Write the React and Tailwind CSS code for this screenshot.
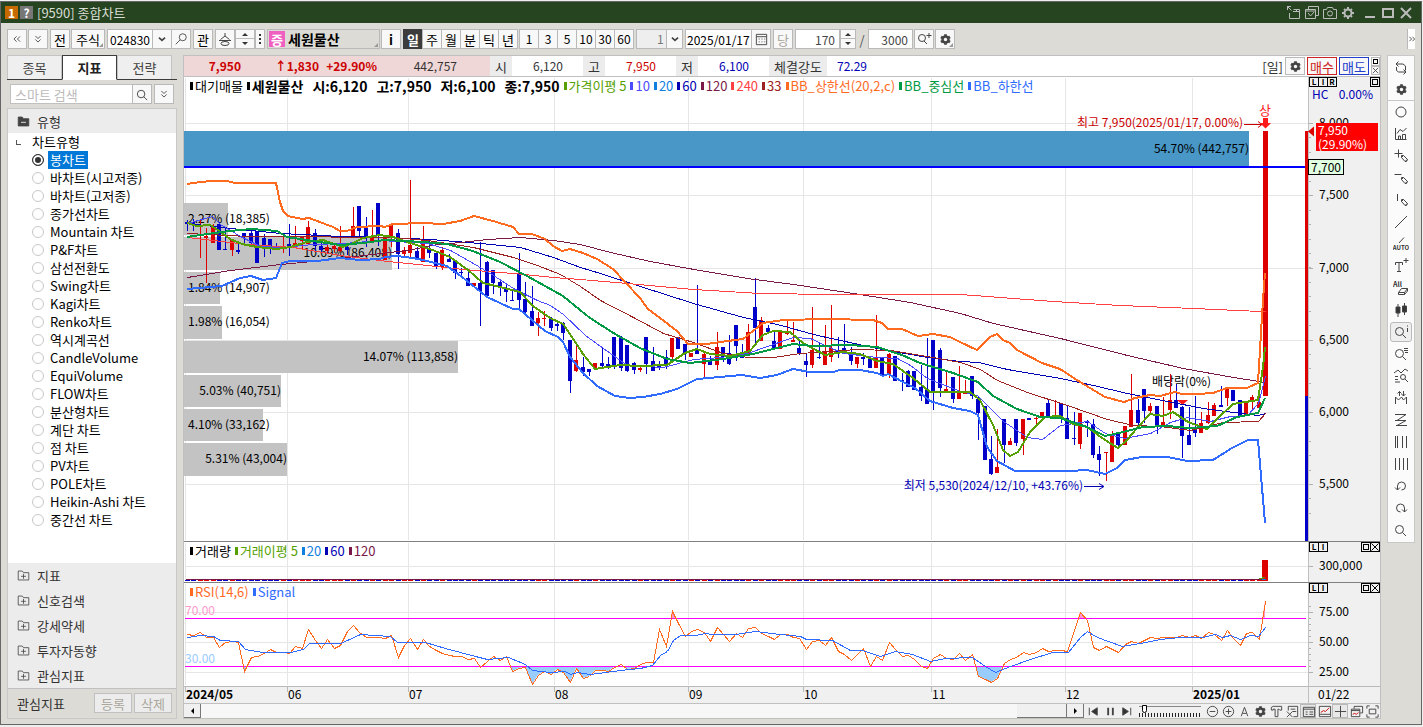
import React, { useState } from "react";
import { FaCog } from "react-icons/fa";

const FONT = "font-['Noto_Sans_CJK_KR',sans-serif]";

const chartTypes = [
    "봉차트", "바차트(시고저종)", "바차트(고저종)", "종가선차트", "Mountain 차트", "P&F차트", "삼선전환도",
    "Swing차트", "Kagi차트", "Renko차트", "역시계곡선", "CandleVolume", "EquiVolume", "FLOW차트",
    "분산형차트", "계단 차트", "점 차트", "PV차트", "POLE차트", "Heikin-Ashi 차트", "중간선 차트"
];

const folders = ["지표", "신호검색", "강세약세", "투자자동향", "관심지표"];

// [high, body top, body bottom, low, up]
const candles = [
    [220,222,224,231,0],[219,222,224,231,0],[219,225,227,258,1],[228,236,238,283,1],[224,226,243,243,1],
    [222,224,250,250,0],[227,249,250,250,0],[239,240,250,256,1],[241,250,252,254,0],[233,233,236,243,0],
    [230,233,243,246,0],[231,231,263,263,0],[234,238,247,257,0],[239,239,246,254,0],[243,247,249,250,0],
    [236,248,249,253,1],[224,244,248,256,0],[226,243,245,247,1],[236,236,241,249,1],[221,227,244,244,1],
    [229,233,246,252,0],[243,246,250,252,0],[245,247,251,253,1],[244,246,249,252,1],[226,247,251,252,1],
    [246,247,250,255,0],[207,226,237,238,1],[206,206,231,237,0],[217,227,238,247,0],[210,238,241,242,1],
    [203,203,236,246,0],[237,237,260,260,1],[224,225,238,247,1],[229,233,254,269,0],[247,250,254,256,1],
    [180,245,253,257,1],[247,251,259,260,0],[226,240,262,262,1],[240,249,253,258,0],[252,253,266,269,0],
    [247,250,267,270,1],[254,259,262,262,0],[260,261,273,279,0],[268,272,273,278,0],[270,278,286,286,0],
    [283,283,286,286,1],[242,283,291,326,0],[261,262,296,296,0],[270,270,283,294,0],[281,282,286,296,0],
    [284,288,292,302,0],[290,300,301,301,0],[253,273,300,308,0],[282,299,312,315,0],[286,311,326,326,0],
    [312,318,323,336,1],[311,318,319,326,1],[317,319,328,331,0],[323,324,326,331,0],[322,323,333,340,0],
    [340,340,381,393,0],[345,360,371,372,1],[357,367,372,376,0],[369,369,372,376,0],[363,363,368,368,1],
    [348,363,366,369,0],[357,364,367,369,0],[337,337,367,369,0],[336,337,368,371,0],[345,345,371,372,0],
    [362,363,370,374,0],[367,368,370,372,1],[337,337,364,374,0],[347,361,371,371,0],[361,364,367,370,0],
    [350,357,365,369,0],[338,338,357,361,1],[337,337,349,349,0],[344,344,354,360,0],[353,353,357,357,1],
    [285,349,354,354,0],[351,354,364,378,1],[356,361,365,365,0],[332,347,365,370,1],[347,347,357,362,0],
    [335,353,364,365,0],[325,325,346,361,0],[344,356,358,358,0],[324,332,354,355,1],[278,307,328,343,0],
    [317,320,341,341,1],[325,328,332,333,0],[332,341,348,348,0],[330,331,349,349,1],[320,332,334,335,1],
    [322,340,342,342,1],[340,348,354,355,0],[353,361,365,377,0],[307,350,365,368,1],[343,357,358,359,0],
    [325,352,365,365,1],[305,348,357,362,1],[337,350,354,358,0],[324,348,353,353,0],[347,354,361,365,0],
    [357,357,364,368,1],[353,357,359,365,0],[358,359,368,368,0],[315,357,368,368,1],[357,358,375,377,0],
    [353,354,375,378,1],[356,356,381,381,0],[373,380,381,391,0],[370,371,387,387,0],[371,371,390,390,0],
    [365,387,396,401,0],[338,389,404,404,0],[340,340,391,410,0],[348,350,388,397,0],[371,389,391,391,1],
    [377,377,399,403,0],[366,393,399,399,1],[380,392,394,394,1],[376,376,396,399,0],[397,399,413,440,0],
    [406,406,460,460,0],[436,459,474,475,0],[429,467,473,473,1],[419,419,445,463,0],[438,441,445,445,1],
    [419,419,443,446,0],[419,419,439,455,1],[418,418,420,420,0],[417,418,419,426,1],[412,412,416,416,1],
    [400,403,416,416,0],[400,415,417,417,1],[403,403,418,423,0],[406,418,439,439,0],[412,438,439,445,0],
    [413,413,444,449,1],[420,421,423,437,0],[419,424,455,458,0],[446,454,460,476,0],[452,452,453,481,1],
    [431,434,462,462,1],[433,434,445,446,0],[426,426,445,445,1],[374,410,427,427,1],[399,410,423,426,0],
    [389,389,411,423,0],[403,406,411,413,1],[406,406,425,434,0],[397,422,426,426,1],[374,400,410,419,1],
    [384,400,408,408,0],[406,407,436,458,0],[407,435,445,445,0],[396,428,433,437,0],[412,423,433,433,1],
    [402,415,423,424,1],[403,405,416,416,1],[386,405,407,407,0],[389,389,398,406,1],[390,390,401,401,0],
    [400,400,416,416,0],[401,401,416,416,1],[395,397,402,411,1],[396,402,408,408,1],[131,131,396,396,1]
];

const lines = [
    { color: "#0000b4", width: 1, points: "187,223 240,229 280,233 340,236 387,237 430,239 480,243 520,247 553,257 580,267 600,273 643,287 693,303 743,317 777,324 817,335 877,348 927,357 960,361 978,362 1007,369 1060,378 1093,385 1127,393 1167,401 1203,408 1233,412 1258,415 1265,413" },
    { color: "#9c2222", width: 1, points: "187,233 247,236 313,236 347,237 393,237 427,240 473,247 513,257 537,265 560,274 580,286 600,300 633,317 663,333 693,342 723,353 747,357 773,357 800,353 857,349 890,350 927,356 960,362 980,369 997,380 1027,392 1067,405 1107,419 1133,425 1160,426 1190,430 1223,422 1258,421 1265,413" },
    { color: "#7a1848", width: 1, points: "187,277 230,270 280,264 323,260 363,255 407,250 437,244 460,242 487,239 520,237 553,240 580,244 610,252 650,261 688,268 747,278 793,284 853,293 910,302 960,313 993,323 1060,338 1127,355 1183,368 1233,377 1265,382" },
    { color: "#ff4040", width: 1, points: "187,237 247,244 293,247 340,255 387,261 427,265 463,269 513,273 553,277 580,279 627,283 693,289 760,293 833,294 960,294 1053,301 1120,305 1193,308 1260,311 1265,311" },
    { color: "#4a4aff", width: 1, points: "187,223 212,216 220,224 240,236 260,246 283,247 313,244 343,243 380,240 427,243 450,250 473,263 493,275 513,288 537,300 550,305 563,314 585,335 603,348 627,365 663,367 693,359 720,357 747,353 767,346 793,337 810,338 827,346 843,353 877,357 897,358 910,365 927,378 960,391 977,395 1003,421 1027,437 1042,439 1060,425 1087,421 1105,433 1124,438 1150,433 1170,422 1187,417 1210,421 1230,416 1247,415 1258,403 1265,376" },
    { color: "#55a000", width: 2, points: "187,223 197,226 210,225 218,230 230,239 242,244 257,247 277,249 290,247 307,242 323,240 343,247 353,243 363,238 380,235 393,237 410,243 430,249 450,257 468,270 483,283 500,287 520,292 533,306 550,318 563,324 572,337 583,354 595,369 620,365 640,366 667,365 685,353 697,349 710,354 730,356 750,351 763,335 773,331 790,332 803,343 825,355 843,352 860,354 877,361 893,364 913,378 930,392 960,392 970,392 980,400 993,425 1003,450 1010,456 1018,452 1030,432 1045,417 1060,416 1073,424 1087,427 1105,440 1118,448 1127,440 1137,428 1150,414 1163,416 1173,412 1188,422 1207,429 1218,418 1233,404 1258,400 1263,367 1265,347" },
    { color: "#ff6a1f", width: 2, points: "187,184 200,182 213,181 227,181 235,183 276,183 280,202 283,211 288,216 302,219 309,218 317,221 333,227 340,231 347,231 357,227 380,226 385,227 393,224 423,223 443,224 460,221 474,216 493,221 513,227 519,234 532,234 545,239 553,246 562,251 570,249 583,253 597,259 613,269 625,282 640,298 648,309 660,318 677,331 688,344 707,344 720,342 743,339 763,323 783,320 827,319 873,320 882,323 888,329 902,329 918,336 933,334 950,337 960,342 977,350 990,337 997,334 1003,340 1010,343 1017,350 1042,363 1060,369 1080,382 1105,397 1124,402 1135,398 1150,395 1160,396 1175,392 1182,394 1197,394 1213,393 1227,388 1247,388 1258,383 1261,333 1263,300 1265,273" },
    { color: "#009944", width: 2, points: "187,237 207,234 230,231 251,229 277,231 287,237 313,241 340,245 363,243 385,240 423,242 447,244 473,251 500,262 527,276 545,286 563,296 580,310 590,318 615,334 640,348 667,359 690,363 723,359 753,354 773,349 793,344 813,346 850,345 877,347 902,355 920,363 953,373 978,382 993,396 1017,409 1040,417 1060,418 1087,427 1105,436 1123,432 1143,427 1167,426 1190,428 1217,426 1237,417 1258,413 1265,398" },
    { color: "#2f6bff", width: 2, points: "187,289 200,288 222,286 240,278 251,276 263,280 276,278 282,263 290,261 317,261 340,258 360,260 380,259 385,257 397,256 413,258 423,260 447,266 462,277 487,297 513,309 519,309 532,320 545,331 558,337 563,342 570,357 583,373 597,386 615,396 630,398 643,397 660,394 677,389 697,379 720,377 742,375 760,378 777,375 793,369 810,372 833,372 840,370 860,370 877,373 883,376 888,374 903,382 915,388 930,401 953,408 970,411 978,415 987,447 997,461 1015,471 1070,471 1087,470 1105,474 1117,468 1125,460 1142,457 1167,457 1188,461 1213,460 1232,448 1248,440 1258,440 1265,523" }
];

const rsi = [
    634,635,632,637,637,647,642,641,642,671,657,656,653,649,652,652,653,646,648,629,640,648,639,648,645,631,625,632,637,637,
    637,638,635,657,645,638,649,639,646,650,653,655,656,656,659,658,667,661,656,660,656,671,668,667,684,675,671,674,669,672,
    682,668,678,676,670,670,671,667,664,669,668,664,662,662,629,646,611,623,636,631,629,632,641,627,634,641,633,637,628,627,
    633,636,639,634,634,637,638,649,641,640,645,637,651,654,660,654,648,666,656,660,642,649,656,655,659,666,668,658,654,658,
    659,653,660,654,676,679,682,678,663,659,657,652,654,652,648,651,650,650,651,630,612,620,647,650,646,649,652,644,641,643,
    640,637,638,637,637,637,635,637,635,638,632,634,640,630,638,645,633,632,639,601
];

const signal = "187,637 200,635 213,636 220,640 238,641 245,649 262,652 290,652 303,649 309,643 340,643 347,640 360,634 390,636 397,642 425,642 445,648 475,656 487,659 508,657 525,664 532,670 550,672 565,671 570,674 577,672 590,674 620,670 640,668 652,665 660,655 667,651 673,640 680,635 695,635 705,633 712,634 735,634 755,631 780,634 800,636 806,639 832,640 850,650 862,650 880,656 895,651 912,654 930,661 945,658 972,657 985,666 995,672 1000,670 1010,666 1030,659 1052,652 1068,652 1080,637 1087,631 1095,636 1105,640 1122,646 1140,643 1160,639 1180,637 1202,637 1215,634 1222,637 1230,635 1240,639 1250,635 1258,636 1265,627";

const profile = [
    { y: 203, h: 32, end: 228, label: "2.27% (18,385)" },
    { y: 237, h: 33, end: 392, label: "10.69% (86,408)" },
    { y: 272, h: 32, end: 220, label: "1.84% (14,907)" },
    { y: 306, h: 33, end: 222, label: "1.98% (16,054)" },
    { y: 341, h: 32, end: 458, label: "14.07% (113,858)" },
    { y: 375, h: 32, end: 281, label: "5.03% (40,751)" },
    { y: 409, h: 32, end: 263, label: "4.10% (33,162)" },
    { y: 443, h: 33, end: 287, label: "5.31% (43,004)" }
];

const months = [
    { x: 185, label: "2024/05", bold: true },
    { x: 287, label: "06" },
    { x: 408, label: "07" },
    { x: 554, label: "08" },
    { x: 688, label: "09" },
    { x: 803, label: "10" },
    { x: 931, label: "11" },
    { x: 1065, label: "12" },
    { x: 1192, label: "2025/01", bold: true }
];

const priceLevels = [
    [123, "8,000"], [195, "7,500"], [268, "7,000"], [340, "6,500"], [412, "6,000"], [484, "5,500"]
];

const candleX = (i) => Math.round(187 + i * 6.38);

/* ---------- icons ---------- */

const Icon = ({ d, size = 16, color = "#444", children, width = 1, className = "" }) => (
    <svg width={size} height={size} viewBox="0 0 16 16" fill="none" stroke={color} strokeWidth={width} className={`shrink-0 ${className}`} aria-hidden="true">
        {d && <path d={d} />}
        {children}
    </svg>
);

const PENCIL = "M8.5 9.5v-2h2l4 4-1 2-1.5 0zM8.5 9.5l2-2M12 13.5l2.5-2";
const LENS = "M10.5 7.5a4 4 0 1 1-8 0a4 4 0 0 1 8 0zM9.5 10.5l3.5 3.5";

const Gear = ({ size = 11 }) => <FaCog size={size} color="#444" aria-hidden="true" />;
const DownDouble = () => <Icon size={14} d="M5 4.5l3 3 3-3M5 8.5l3 3 3-3" />;
const DownArrow = () => <Icon size={14} width={2} d="M4.5 6.5l3.5 3 3.5-3" />;
const Corner = () => <span className="absolute bottom-px right-px border-b-4 border-l-4 border-b-[#999] border-l-transparent" />;

const sideTools = [
    { name: "새로고침", icon: <Icon d="M5.5 1.5L3 4l2.500 2.500M3 4h7l2.500 2v4.500M3.500 7v3.500l2 1.500H13M10.500 9.500L13 12l-2.500 2.500" /> },
    { name: "설정", icon: <Gear />, divider: true },
    { name: "원", icon: <Icon><circle cx="8" cy="8" r="5" /></Icon> },
    { name: "지표추가", icon: <Icon d="M2.5 2v11.5h11M4 7.5l3-4 3 2 3.5-3.5M5.5 13v-3h2v3M9.5 13V8.5h3V13" /> },
    { name: "십자선", icon: <Icon d={"M1.5 5.5h8M5.5 1.5v8" + PENCIL} /> },
    { name: "수평선", icon: <Icon d={"M1.5 4.5h7" + PENCIL} /> },
    { name: "수직선", icon: <Icon d={"M4.5 2v7" + PENCIL} /> },
    { name: "추세선", icon: <Icon d="M2 14L14 2" /> },
    {
        name: "자동추세선",
        icon: (
            <Icon d="M6 7L11 1.5">
                <text x="8" y="14" textAnchor="middle" fontSize="6" fontWeight="700" fill="#333" stroke="none">AUTO</text>
            </Icon>
        )
    },
    { name: "텍스트", icon: <Icon d="M2.5 7V4.5h7V7M6 4.5v9M4 13.5h4M10.5 2.5h5M13 0v5" /> },
    {
        name: "전체삭제",
        icon: (
            <Icon d="M5.5 12.5l3-4h6l-3 4zM5.5 12.5v2h6l3-3.5v-2.5M11.5 12.5v2">
                <text x="0" y="7" fontSize="7" fontWeight="700" fill="#333" stroke="none">All</text>
            </Icon>
        )
    },
    { name: "캔들", icon: <Icon d="M5 2v13M11.5 1v12"><path d="M3 5h4v6H3zM9.5 4h4v6h-4z" fill="#333" /></Icon> },
    { name: "정보보기", active: true, icon: <Icon d={LENS + "M14.5 4v4M14.5 1.5v1"} /> },
    { name: "목록보기", icon: <Icon d={LENS + "M11 2.5h4M11 4.5h4M12 6.5h3"} /> },
    { name: "패턴검색", icon: <Icon d="M1 5l4-3 3 3 4-4 3 2M2 8.5h3M2 11.5h3M2 14h5M12.5 9a2.5 2.5 0 1 1-5 0a2.5 2.5 0 0 1 5 0zM12 11l3 3" /> },
    { name: "변곡점", icon: <Icon d="M2.5 14V7l3 3 3-3 2 3 3-3v7M6.5 6V1.5M4.5 3.5l2-2 2 2M10.5 1v5M8.5 4l2 2 2-2" /> },
    { name: "지그재그", icon: <Icon d="M2 2.5h11L4 8.500M2 8.5h11L4 13.5M3 13.5h11" /> },
    { name: "등간격선", icon: <Icon d="M2.5 2v12M4.5 2v12M9.5 2v12M13.5 2v12" /> },
    { name: "시간선", icon: <Icon d="M2.5 2v12M6.5 2v12M10.5 2v12M14.5 2v12" /> },
    { name: "되돌리기", icon: <Icon d="M4.5 12V8A4 4 0 1 1 8.5 12M2 9.5L4.5 12 7 9.5" /> },
    { name: "다시실행", icon: <Icon d="M11.5 12V8A4 4 0 1 0 7.5 12M14 9.5L11.5 12 9 9.5" /> },
    { name: "확대", icon: <Icon d={LENS} /> }
];

const bottomTools = [
    { name: "축소", icon: <Icon size={15}><circle cx="8" cy="8" r="5.5" /><path d="M5 8h6" /></Icon> },
    { name: "확대", icon: <Icon size={15}><circle cx="8" cy="8" r="5.5" /><path d="M5 8h6M8 5v6" /></Icon> },
    { name: "글자", icon: <Icon size={15} d="M4.5 13L8 3.5 11.5 13M6 10h4" /> },
    { name: "설정", icon: <Gear size={11} /> },
    { name: "도구", icon: <Icon size={15} d="M2.500 6.500v-3l2-1h9v4h-2l-1-1h-1v8h-3v-8h-2v1z" /> },
    { name: "엑셀", icon: <Icon size={15} d="M3.5 7V2.5h10v11H9M6 5.5h5M8 8h4M2 8l6 6M8 8l-6 6" /> },
    { name: "데이터", active: true, icon: <Icon size={15} d="M2.5 3.5h12v10h-12zM2.5 5.5h12M5 8.5h2M5 11h2M9 8.5h4M9 11h4" /> },
    { name: "차트", icon: <Icon size={15} d="M2.5 2.5h12v11h-12zM2.5 11h12"><path d="M4 9l3-2 2 1 4-4" stroke="#c00" /></Icon> },
    { name: "십자", active: true, icon: <Icon size={15} d="M8 2v12M2 8h12" /> },
    { name: "창복사", icon: <Icon size={15} d="M5.5 5V2.5h9v7H12M2.5 5.5h9v8h-9zM2.5 7h9"><path d="M4 11l2-1 2 1 2-2" stroke="#c00" /></Icon> },
    { name: "전체화면", icon: <Icon size={15} d="M2 5V2h3M11 2h3v3M14 11v3h-3M5 14H2v-3M4.5 5.5h7v5h-7z" /> }
];

/* ---------- small parts ---------- */

const ToolButton = ({ children, className = "w-5", label, active }) => (
    <button
        type="button"
        aria-label={label}
        className={`relative flex h-5 shrink-0 items-center justify-center border text-[13px] leading-none ${active ? "border-[#3c3c3c] bg-[#3c3c3c] font-bold text-white" : "border-[#b9b9b9] bg-[#f8f8f8] text-black"} ${className}`}
    >
        {children}
    </button>
);

const Spinner = ({ label, className = "w-4" }) => (
    <div className={`flex h-5 shrink-0 flex-col ${className}`}>
        <button type="button" aria-label={`${label} 증가`} className="flex h-[10px] items-center justify-center border border-[#b9b9b9] bg-[#f8f8f8]">
            <span className="border-x-[3px] border-b-[3px] border-x-transparent border-b-[#333]" />
        </button>
        <button type="button" aria-label={`${label} 감소`} className="flex h-[10px] items-center justify-center border border-t-0 border-[#b9b9b9] bg-[#f8f8f8]">
            <span className="border-x-[3px] border-t-[3px] border-x-transparent border-t-[#333]" />
        </button>
    </div>
);

const TitleBar = () => (
    <header className="flex h-[21px] items-center bg-[#26441f] pl-1 pr-[5px] text-[#d8ddd5]">
        <span className="flex h-[13px] w-[13px] items-center justify-center bg-[#c66a00] text-[12px] font-bold leading-none text-white">1</span>
        <button type="button" className="ml-[2px] flex h-[13px] w-[13px] items-center justify-center bg-[#777] text-[12px] font-bold leading-none text-white">?</button>
        <h1 className="ml-1 text-[13px] leading-none">[9590] 종합차트</h1>
        <div className="ml-auto flex items-center">
            <button type="button" aria-label="창 분리" className="w-[18px]"><Icon color="#bbb" d="M1 1.5h4M1.5 1v4M1.5 1.5l4 4M3.5 8v5.5h10v-9h-6M7 6.5h6M10.5 4v2" /></button>
            <button type="button" aria-label="창 복사" className="w-[18px]"><Icon color="#bbb" d="M4.5 4V1.5h10v9H12M1.5 4.5h10v9h-10zM1.5 6h10M4 8l2.5 3L10 7" /></button>
            <button type="button" aria-label="화면 캡처" className="w-[18px]"><Icon color="#bbb" d="M1.5 4.5h3l1-2h5l1 2h3v9h-13z"><circle cx="8" cy="8.5" r="2.5" /></Icon></button>
            <button type="button" aria-label="화면 설정" className="mr-1 w-[18px]"><Icon color="#bbb" width={2}><circle cx="8" cy="8" r="3.5" /><path d="M8 2v2M8 12v2M2 8h2M12 8h2M4 4l1 1M11 11l1 1M12 4l-1 1M4 12l1-1" /></Icon></button>
            <button type="button" aria-label="최소화" className="w-[18px]"><Icon color="#bbb" width={2} d="M3 12h10" /></button>
            <button type="button" aria-label="최대화" className="w-[18px]"><Icon color="#bbb" width={2} d="M3 4h10v8H3z" /></button>
            <button type="button" aria-label="닫기" className="w-[18px]"><Icon color="#bbb" width={2} d="M3 3l10 10M13 3L3 13" /></button>
        </div>
    </header>
);

const Toolbar = () => (
    <div className="flex h-8 items-center px-[6px]">
        <ToolButton label="접기"><Icon size={14} d="M7.5 5l-3 3 3 3M11.5 5l-3 3 3 3" /></ToolButton>
        <ToolButton label="펼치기" className="ml-px w-5"><DownDouble /></ToolButton>
        <ToolButton className="ml-[2px] w-5">전</ToolButton>
        <ToolButton className="ml-px w-[34px]">주식<Corner /></ToolButton>
        <input aria-label="종목코드" defaultValue="024830" className="ml-[2px] h-5 w-[46px] shrink-0 border border-[#b9b9b9] bg-white px-[2px] text-[12px] text-black outline-none" />
        <ToolButton label="종목 목록" className="-ml-px w-5"><DownArrow /></ToolButton>
        <ToolButton label="종목 검색" className="-ml-px w-5"><Icon size={14} d="M14 6a4 4 0 1 1-8 0a4 4 0 0 1 8 0zM7 9l-5 5" /></ToolButton>
        <ToolButton className="ml-[2px] w-5">관</ToolButton>
        <ToolButton label="종목 이동" className="ml-[2px] w-5"><Icon d="M8 2v3M3.5 8.5L8 5l4.5 3.5M2 9.5h12M8 9.5v1M12 12.5a4 2 0 1 1-8 0a4 2 0 0 1 8 0z" /></ToolButton>
        <Spinner label="종목" className="w-5" />
        <ToolButton label="더보기" className="w-[10px]"><Icon size={16} color="#333" width={2} d="M8 3v2M8 7v2M8 11v2" /></ToolButton>
        <button type="button" className="relative ml-[2px] flex h-5 w-[113px] shrink-0 items-center border border-[#b9b9b9] bg-[#dcdbd5] pl-px text-[14px] font-bold leading-none">
            <span className="mr-[3px] flex h-4 w-4 items-center justify-center bg-[#f060c0] text-[13px] text-white">증</span>
            세원물산
            <Corner />
        </button>
        <ToolButton className="ml-px w-5 font-bold">i</ToolButton>
        <div className="ml-[2px] flex -space-x-px">
            {["일", "주", "월", "분", "틱", "년"].map((p) => <ToolButton key={p} active={p === "일"}>{p}</ToolButton>)}
        </div>
        <div className="ml-px flex -space-x-px">
            {["1", "3", "5", "10", "30", "60"].map((n) => <ToolButton key={n}><span className="text-[12px]">{n}</span></ToolButton>)}
        </div>
        <div className="relative ml-[2px] flex h-5 w-[47px] shrink-0">
            <select aria-label="분 단위" disabled className="block h-5 w-full appearance-none border border-[#b9b9b9] bg-[#eee] pl-5 text-[12px] leading-none text-[#777]">
                <option>1</option>
            </select>
            <span className="pointer-events-none absolute inset-y-0 right-0 flex w-[17px] items-center justify-center border border-[#b9b9b9] bg-[#f8f8f8]"><DownArrow /></span>
        </div>
        <input aria-label="조회일" defaultValue="2025/01/17" className="ml-[2px] h-5 w-[67px] shrink-0 border border-[#b9b9b9] bg-white px-px text-[12px] text-black outline-none" />
        <ToolButton label="달력" className="-ml-px w-5"><Icon size={15} d="M2.5 2.5h11v11h-11zM2.5 5h11M5 7.5h1M8 7.5h1M11 7.5h1M5 10.5h1M8 10.5h1M11 10.5h1" /></ToolButton>
        <ToolButton className="ml-[2px] w-5"><span className="text-[#aaa79c]">당</span></ToolButton>
        <input aria-label="표시 봉수" defaultValue="170" className="ml-[2px] h-5 w-[45px] shrink-0 border border-[#b9b9b9] bg-white pr-1 text-right text-[12px] text-[#444] outline-none" />
        <Spinner label="표시 봉수" />
        <span className="w-3 text-center text-[13px] leading-none text-[#555]">/</span>
        <input aria-label="전체 봉수" defaultValue="3000" className="h-5 w-[45px] shrink-0 border border-[#b9b9b9] bg-white pr-1 text-right text-[12px] text-[#444] outline-none" />
        <ToolButton label="확대 조회" className="ml-px w-5"><Icon d="M9.5 7a3.5 3.5 0 1 1-7 0a3.5 3.5 0 0 1 7 0zM8 10l3 3M10.5 4.5h5M13 2v5" /></ToolButton>
        <ToolButton label="차트 설정" className="ml-px w-5"><Gear /><Corner /></ToolButton>
        <button type="button" aria-label="도구 더보기" className="ml-auto flex h-5 w-2 items-center justify-center border-l border-[#b9b9b9] bg-white"><Icon size={14} d="M5 5.5L7.5 8 5 10.5M8.5 5.5L11 8l-2.5 2.5" /></button>
    </div>
);

const Sidebar = () => {
    const [tab, setTab] = useState("지표");
    const [type, setType] = useState("봉차트");

    return (
        <aside className="flex w-[170px] shrink-0 flex-col">
            <div className="flex h-[25px] border-b border-[#3c3c3c]">
                {["종목", "지표", "전략"].map((t) => (
                    <button
                        key={t}
                        type="button"
                        onClick={() => setTab(t)}
                        className={`w-[55px] border text-[13px] leading-none ${t === tab ? "-mb-px border-[#3c3c3c] border-b-white bg-white font-bold text-[#222]" : "border-[#c4c4c4] border-b-0 bg-[#efefef] text-[#444]"}`}
                    >
                        {t}
                    </button>
                ))}
            </div>
            <div className="flex h-7 items-center px-[3px]">
                <input aria-label="스마트 검색" placeholder="스마트 검색" className="h-5 min-w-0 flex-1 border border-[#c0c0c0] bg-white px-1 text-[13px] outline-none placeholder:text-[#bbb]" />
                <ToolButton label="검색" className="-ml-px w-5"><Icon size={15} d={LENS} /></ToolButton>
                <ToolButton label="검색 옵션" className="ml-[2px] w-5"><DownDouble /></ToolButton>
            </div>
            <div className="flex flex-1 flex-col border border-[#c8c8c8] bg-white">
                <div className="flex h-6 items-center bg-[#ececec] pl-[9px] text-[13px] leading-none text-[#333]">
                    <Icon size={13} className="mr-[7px]"><path d="M1.5 2.5h5l1.5 2h6.5v9h-13z" fill="#444" /><path d="M5 9h6" stroke="#fff" /></Icon>
                    유형
                </div>
                <fieldset className="flex-1 text-[13px] leading-[18px] text-black">
                    <legend className="flex h-[18px] items-center pl-2">
                        <span className="mr-[11px] h-[5px] w-[5px] border-b border-l border-[#555]" />
                        차트유형
                    </legend>
                    {chartTypes.map((c) => (
                        <label key={c} className="flex h-[18px] items-center pl-6">
                            <input
                                type="radio"
                                name="chartType"
                                checked={type === c}
                                onChange={() => setType(c)}
                                className="h-3 w-3 shrink-0 appearance-none rounded-full border border-[#c8c8c8] bg-white checked:border-[#333] checked:bg-[#333] checked:shadow-[inset_0_0_0_2px_#fff]"
                            />
                            <span className={`ml-1 px-[2px] ${type === c ? "bg-[#0078d7] text-white" : ""}`}>{c}</span>
                        </label>
                    ))}
                </fieldset>
                <ul className="bg-[#ececec] text-[13px] leading-none text-[#333]">
                    {folders.map((f) => (
                        <li key={f}>
                            <button type="button" className="flex h-[25px] w-full items-center pl-[9px]">
                                <Icon size={13} className="mr-[7px]" d="M1.5 13.5v-11h5l1.5 2h6.5v9zM5 9h6M8 6v6" />
                                {f}
                            </button>
                        </li>
                    ))}
                </ul>
                <div className="flex h-[30px] items-center border-t border-[#c0c0c0] bg-[#dcdbd5] pb-px pl-[9px] pr-1 text-[13px] leading-none text-[#333]">
                    관심지표
                    <button type="button" disabled className="ml-auto h-5 w-[38px] border border-[#c0c0c0] bg-[#ececec] text-[#aaa79c]">등록</button>
                    <button type="button" disabled className="ml-[2px] h-5 w-[38px] border border-[#c0c0c0] bg-[#ececec] text-[#aaa79c]">삭제</button>
                </div>
            </div>
        </aside>
    );
};

const QuoteBar = () => (
    <div className="flex h-[22px] items-center border-y border-[#c0c0c0] bg-white text-[12px] leading-none text-[#333]">
        <div className="flex h-full w-[306px] shrink-0 items-center bg-[#f0d7d7]">
            <strong className="w-[57px] text-right text-[#cc0000]">7,950</strong>
            <strong className="w-[78px] text-right text-[#cc0000]">↑1,830</strong>
            <strong className="w-[58px] text-right text-[#cc0000]">+29.90%</strong>
            <span className="w-20 text-right">442,757</span>
        </div>
        <span className="flex h-full w-[22px] items-center justify-center bg-[#ececec] text-[13px]">시</span>
        <span className="w-[71px] pr-5 text-right">6,120</span>
        <span className="flex h-full w-[22px] items-center justify-center bg-[#ececec] text-[13px]">고</span>
        <span className="w-[71px] pr-5 text-right text-[#cc0000]">7,950</span>
        <span className="flex h-full w-[22px] items-center justify-center bg-[#ececec] text-[13px]">저</span>
        <span className="w-[71px] pr-5 text-right text-[#0000b4]">6,100</span>
        <span className="flex h-full w-[58px] items-center justify-center bg-[#ececec] text-[13px]">체결강도</span>
        <span className="pl-[10px] text-[#0000b4]">72.29</span>
        <div className="ml-auto flex items-center gap-[2px]">
            <span className="text-[13px]">[일]</span>
            <button type="button" aria-label="차트 설정" className="flex h-[18px] w-5 items-center justify-center border border-[#b9b9b9] bg-[#f8f8f8]"><Gear /></button>
            <button type="button" className="h-[18px] w-[30px] border border-[#cc2222] bg-[#f8f8f8] text-[13px] leading-none text-[#cc2222]">매수</button>
            <button type="button" className="h-[18px] w-[30px] border border-[#2040cc] bg-[#f8f8f8] text-[13px] leading-none text-[#2040cc]">매도</button>
            <div className="flex flex-col">
                <button type="button" aria-label="확장" className="flex h-[9px] w-[9px] items-center justify-center border border-[#b9b9b9] bg-[#f8f8f8]"><span className="h-[5px] w-[5px] border border-black" /></button>
                <button type="button" aria-label="닫기" className="flex h-[9px] w-[9px] items-center justify-center border border-[#b9b9b9] bg-[#f8f8f8]"><Icon size={7} width={2} d="M2 2l12 12M14 2L2 14" /></button>
            </div>
        </div>
    </div>
);

const PanelButtons = ({ left, closable }) => (
    <div className="absolute right-0 top-0 flex w-[71px] justify-between">
        <div className="flex -space-x-px">
            {left.map((l) => (
                <button key={l} type="button" className="flex h-[10px] w-[10px] items-center justify-center border border-black bg-[#f0f0f0] text-[8px] font-bold leading-none text-black">{l}</button>
            ))}
        </div>
        <div className="flex -space-x-px">
            <button type="button" aria-label="최대화" className="flex h-[10px] w-[10px] items-center justify-center border border-black bg-[#f0f0f0]"><span className="h-[6px] w-[6px] border border-black" /></button>
            {closable && <button type="button" aria-label="닫기" className="flex h-[10px] w-[10px] items-center justify-center border border-black bg-[#f0f0f0]"><Icon size={8} color="#000" width={2} d="M1 1l14 14M15 1L1 15" /></button>}
        </div>
    </div>
);

const Legend = ({ items }) => (
    <div className="absolute left-[6px] top-0 flex gap-1 whitespace-nowrap text-[13px] leading-[18px]">
        {items.map(([label, color, quote]) => (
            <span key={label} className="flex items-center" style={{ color }}>
                <span className="mr-[2px] h-2 w-[3px]" style={{ backgroundColor: color }} />
                {quote ? (
                    <strong className="flex gap-[9px] text-[14px]">
                        {label}
                        {quote.map((q) => <span key={q}>{q}</span>)}
                    </strong>
                ) : label}
            </span>
        ))}
    </div>
);

const Grid = ({ top, height, levels }) => (
    <g shapeRendering="crispEdges">
        <rect x="184" y={top} width="1125" height={height} fill="#fff" />
        {months.map((m) => <rect key={m.x} x={m.x} y={top + 1} width="1" height={height - 2} fill="#e6e6e6" />)}
        {levels.map((y) => <rect key={y} x="185" y={y} width="1123" height="1" fill="#e6e6e6" />)}
    </g>
);

const Axis = ({ top, height, levels, minor = [] }) => (
    <g>
        <rect x="1309" y={top} width="71" height={height} fill="#f0f0f0" />
        <rect x="1308" y={top} width="1" height={height} fill="#c0c0c0" />
        {minor.map((y) => <rect key={y} x="1309" y={y} width="2" height="1" fill="#b0b0b0" />)}
        {levels.map(([y, label]) => (
            <g key={label}>
                <rect x="1309" y={y} width="4" height="1" fill="#b0b0b0" />
                <text x="1319" y={y + 4} fill="#000">{label}</text>
            </g>
        ))}
    </g>
);

const PricePanel = () => (
    <section className="relative">
        <svg viewBox="184 77 1196 464" className="block w-full text-[12px]" role="img" aria-label="세원물산 일봉 차트">
            <Grid top={77} height={464} levels={priceLevels.map((l) => l[0])} />
            <Axis top={77} height={464} levels={priceLevels} minor={Array.from({ length: 28 }, (_, i) => Math.round(123 + i * 14.44))} />

            {/* volume by price */}
            <g shapeRendering="crispEdges">
                <rect x="184" y="131" width="1065" height="35" fill="#4897c7" />
                {profile.map((p) => <rect key={p.y} x="184" y={p.y} width={p.end - 184} height={p.h} fill="#c3c3c3" />)}
            </g>
            <text x="1249" y="153" textAnchor="end">54.70% (442,757)</text>
            {profile.map((p) => (
                <text key={p.y} x={p.end > 280 ? p.end : 188} y={p.y + 20} textAnchor={p.end > 280 ? "end" : "start"}>{p.label}</text>
            ))}
            <text x="1152" y="386">배당락(0%)</text>

            {/* candles */}
            <g shapeRendering="crispEdges">
                {candles.map(([high, top, bottom, low, up], i) => {
                    const x = candleX(i);
                    return (
                        <g key={i} fill={up ? "#dd0000" : "#0000c8"}>
                            <rect x={x} y={high} width="1" height={low - high} />
                            <rect x={x - 2} y={top} width={i === 169 ? 5 : 4} height={bottom - top} />
                        </g>
                    );
                })}
            </g>
            <path d="M1177 400h11l-5.5 5z" fill="#ff1a1a" />

            <g fill="none" shapeRendering="crispEdges" strokeLinejoin="round">
                {lines.map((l) => (
                    <polyline key={l.color} points={l.points} stroke={l.color} strokeWidth={l.width} transform={l.width === 1 ? "translate(0.5 0.5)" : undefined} />
                ))}
            </g>
            <rect x="184" y="166" width="1124" height="2" fill="#0000ff" />

            {/* high and low marks */}
            <text x="1243" y="127" textAnchor="end" fill="#cc0000">최고 7,950(2025/01/17, 0.00%)</text>
            <path d="M1244 124.5h18M1258 121.5l4 3-4 3" fill="none" stroke="#cc0000" />
            <text x="1265" y="115" textAnchor="middle" fontSize="13" fill="#ff1a1a">상</text>
            <path d="M1263 118h5v5h3l-5.5 5.5-5.5-5.5h3z" fill="#ff1a1a" />
            <text x="1083" y="490" textAnchor="end" fill="#0000b4">최저 5,530(2024/12/10, +43.76%)</text>
            <path d="M1084 486.5h19M1099 483.5l5 3-5 3" fill="none" stroke="#0000b4" />

            {/* price range strip */}
            <rect x="1305" y="131" width="3" height="265" fill="#dd0000" />
            <rect x="1305" y="396" width="3" height="145" fill="#0000c8" />
            <text x="1312" y="99" fill="#0000b4">HC</text>
            <text x="1373" y="99" textAnchor="end" fill="#0000b4">0.00%</text>
            <path d="M1308 131.5l6-5v10z" fill="#dd0000" />
            <rect x="1316" y="123" width="62" height="28" fill="#ff0000" />
            <text x="1318" y="135" fill="#fff">7,950</text>
            <text x="1318" y="149" fill="#fff">(29.90%)</text>
            <rect x="1308.5" y="159.5" width="35" height="15" fill="#e1ffe1" stroke="#000" />
            <text x="1311" y="172">7,700</text>
        </svg>
        <Legend
            items={[
                ["대기매물", "#000000"],
                ["세원물산", "#000000", ["시:6,120", "고:7,950", "저:6,100", "종:7,950"]],
                ["가격이평 5", "#55a000"],
                ["10", "#4a4aff"],
                ["20", "#1080e0"],
                ["60", "#0000b4"],
                ["120", "#7a1848"],
                ["240", "#ff4040"],
                ["33", "#9c2222"],
                ["BB_상한선(20,2,c)", "#ff6a1f"],
                ["BB_중심선", "#009944"],
                ["BB_하한선", "#2f6bff"]
            ]}
        />
        <PanelButtons left={["L", "I", "R"]} />
    </section>
);

const VolumePanel = () => (
    <section className="relative border-t border-[#808080]">
        <svg viewBox="184 542 1196 40" className="block w-full text-[12px]" role="img" aria-label="거래량">
            <Grid top={542} height={40} levels={[566]} />
            <Axis top={542} height={40} levels={[[566, "300,000"]]} />
            <g shapeRendering="crispEdges">
                {candles.map((c, i) => <rect key={i} x={candleX(i) - 2} y="580" width="5" height="1" fill={c[4] ? "#dd0000" : "#0000c8"} />)}
                <rect x="186" y="579" width="1077" height="1" fill="#7a1848" />
                <rect x="1262" y="560" width="6" height="21" fill="#dd0000" />
                <path d="M1259 578.5h3v-1h3" stroke="#55a000" fill="none" />
                <path d="M1262 579.5h4" stroke="#1080e0" fill="none" />
            </g>
        </svg>
        <Legend items={[["거래량", "#000000"], ["거래이평 5", "#55a000"], ["20", "#1080e0"], ["60", "#0000b4"], ["120", "#7a1848"]]} />
        <PanelButtons left={["L", "I"]} closable />
    </section>
);

const RsiPanel = () => {
    const points = rsi.map((y, i) => `${candleX(i)},${y}`).join(" ");
    return (
        <section className="relative border-t border-[#808080]">
            <svg viewBox="184 583 1196 103" className="block w-full text-[12px]" role="img" aria-label="RSI">
                <defs>
                    <clipPath id="over"><rect x="184" y="583" width="1124" height="35" /></clipPath>
                    <clipPath id="under"><rect x="184" y="666" width="1124" height="20" /></clipPath>
                </defs>
                <Grid top={583} height={103} levels={[612, 642, 672]} />
                <Axis top={583} height={103} levels={[[612, "75.00"], [642, "50.00"], [672, "25.00"]]} minor={[606, 618, 624, 630, 636, 648, 654, 660, 666]} />
                <text x="185" y="615" fill="#ff99cc">70.00</text>
                <text x="185" y="663" fill="#99ccff">30.00</text>
                <polygon points={`187,618 ${points} 1265,618`} fill="#ff99cc" clipPath="url(#over)" />
                <polygon points={`187,666 ${points} 1265,666`} fill="#99ccff" clipPath="url(#under)" />
                <g fill="none" shapeRendering="crispEdges">
                    <rect x="185" y="618" width="1121" height="1" fill="#ff00ff" />
                    <rect x="185" y="666" width="1121" height="1" fill="#ff00ff" />
                    <g transform="translate(0.5 0.5)">
                        <polyline points={points} stroke="#ff6a1f" />
                        <polyline points={signal} stroke="#2f6bff" />
                    </g>
                </g>
            </svg>
            <Legend items={[["RSI(14,6)", "#ff6a1f"], ["Signal", "#2f6bff"]]} />
            <PanelButtons left={["L", "I"]} closable />
        </section>
    );
};

const DateAxis = () => (
    <svg viewBox="184 686 1196 17" className="block w-full overflow-visible text-[12px]" role="img" aria-label="날짜 축">
        <rect x="184" y="686" width="1196" height="17" fill="#f0f0f0" />
        <rect x="184" y="686" width="1196" height="1" fill="#b9b9b9" />
        <rect x="1308" y="686" width="1" height="17" fill="#c0c0c0" />
        {months.map((m) => (
            <g key={m.x}>
                <rect x={m.x} y="687" width="1" height="5" fill="#b9b9b9" />
                <text x={m.x + 1} y="699" fontWeight={m.bold ? 700 : 400}>{m.label}</text>
            </g>
        ))}
        <text x="1318" y="699">01/22</text>
    </svg>
);

const BottomBar = () => (
    <div className="flex h-4 items-center border-y border-[#c0c0c0] bg-[#f0f0f0]">
        <div className="flex h-full flex-1 bg-[#f7f7f7]">
            <button type="button" aria-label="왼쪽으로" className="flex h-full w-[17px] items-center justify-center border-b border-r border-[#777] bg-[#f0f0f0]"><span className="border-y-[3px] border-r-[3px] border-y-transparent border-r-black" /></button>
            <button type="button" aria-label="스크롤 위치" className="ml-auto h-full w-[50px] border-b border-r border-[#777] bg-[#f0f0f0]" />
            <button type="button" aria-label="오른쪽으로" className="flex h-full w-[17px] items-center justify-center border-b border-r border-[#777] bg-[#f0f0f0]"><span className="border-y-[3px] border-l-[3px] border-y-transparent border-l-black" /></button>
        </div>
        <div className="flex w-[52px] items-center justify-between px-[2px]">
            <button type="button" aria-label="처음"><Icon size={15} d="M3.5 4v8"><path d="M12 4v8L6 8z" fill="#333" /></Icon></button>
            <button type="button" aria-label="일시정지"><Icon size={15} width={2} d="M5.5 4v8M10.5 4v8" /></button>
            <button type="button" aria-label="끝"><Icon size={15} d="M12.5 4v8"><path d="M4 4v8l6-4z" fill="#333" /></Icon></button>
        </div>
        <div className="flex w-[68px] flex-col px-[3px]">
            <input
                type="range"
                aria-label="재생 속도"
                defaultValue="5"
                className="h-2 w-full appearance-none bg-[linear-gradient(#888,#888)] bg-[length:100%_1px] bg-[position:0_1px] bg-no-repeat [&::-webkit-slider-thumb]:h-2 [&::-webkit-slider-thumb]:w-[5px] [&::-webkit-slider-thumb]:appearance-none [&::-webkit-slider-thumb]:rounded-b-sm [&::-webkit-slider-thumb]:border [&::-webkit-slider-thumb]:border-black [&::-webkit-slider-thumb]:bg-white"
            />
            <span className="h-1 w-full bg-[repeating-linear-gradient(90deg,#222_0_1px,transparent_1px_3px)]" />
        </div>
        <div className="flex">
            {bottomTools.map((t) => (
                <button key={t.name} type="button" aria-label={t.name} className={`flex h-[14px] w-4 items-center justify-center ${t.active ? "border border-[#b9b9b9] bg-[#e8e8e8]" : ""}`}>{t.icon}</button>
            ))}
        </div>
    </div>
);

const SideTools = () => (
    <nav className="w-7 shrink-0 self-start border border-[#c8c8c8] bg-[#fbfbfb] py-px">
        {sideTools.map((t) => (
            <div key={t.name} className={`flex h-[22px] items-center justify-center ${t.divider ? "border-b border-[#c8c8c8]" : ""}`}>
                <button type="button" aria-label={t.name} className={`flex h-5 w-[22px] items-center justify-center ${t.active ? "rounded-[3px] border border-[#b9b9b9] bg-[#efefef]" : ""}`}>{t.icon}</button>
            </div>
        ))}
    </nav>
);

const App = () => {
    return (
        <div className={`bg-[#eeeeee] pb-[2px] pr-px pt-px ${FONT}`}>
            <div className="border border-[#666] bg-[#dcdbd5]">
                <TitleBar />
                <Toolbar />
                <div className="flex gap-[6px] px-[6px] pb-[5px]">
                    <Sidebar />
                    <main className="min-w-0 flex-1 border-x border-[#c0c0c0]">
                        <QuoteBar />
                        <PricePanel />
                        <VolumePanel />
                        <RsiPanel />
                        <DateAxis />
                        <BottomBar />
                    </main>
                    <SideTools />
                </div>
            </div>
        </div>
    );
};

export default App;
